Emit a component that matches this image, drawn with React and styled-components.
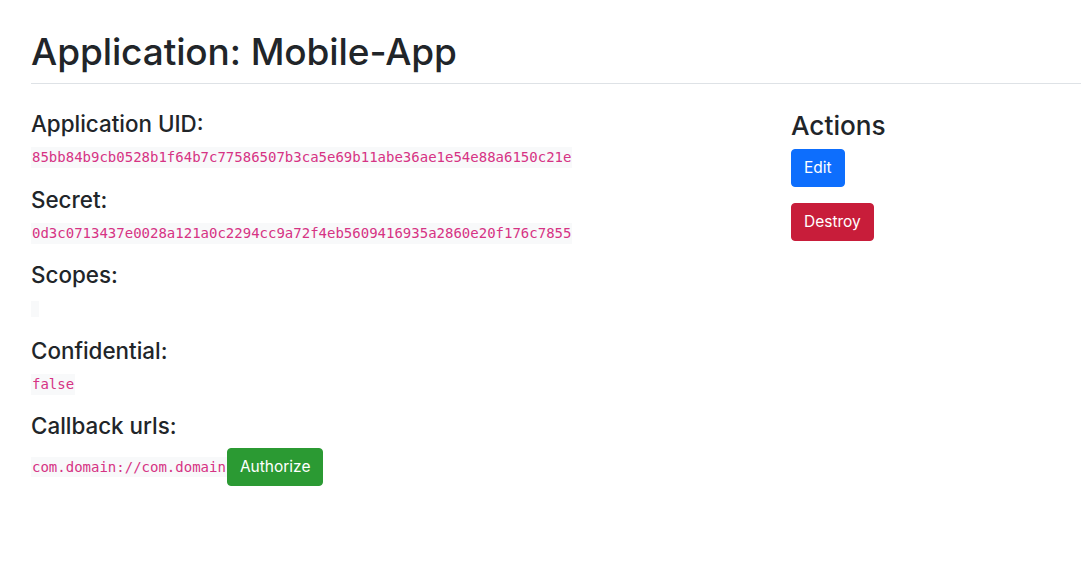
import React from "react";
import styled, { createGlobalStyle } from "styled-components";

const Global = createGlobalStyle`
  html, body { margin: 0; padding: 0; background: #fff; }
  body {
    font-family: Inter, "Noto Sans", "Liberation Sans", sans-serif;
    color: #212529;
    font-size: 16px;
    line-height: 1.5;
  }
  * { box-sizing: border-box; }
`;

const Page = styled.div`
  padding: 29px 0 0 31px;
`;

const Header = styled.div`
  border-bottom: 1px solid #dee2e6;
  padding-bottom: 8px;
  margin-bottom: 26px;
`;

const Title = styled.h1`
  margin: 0;
  font-size: 37px;
  font-weight: 500;
  line-height: 46px;
  letter-spacing: -0.1px;
`;

const Row = styled.div`
  display: grid;
  grid-template-columns: 760px 1fr;
`;

const Column = styled.div`
  display: flex;
  flex-direction: column;
  align-items: flex-start;
`;

const Label = styled.h4`
  margin: 0 0 8px;
  font-size: 22.4px;
  font-weight: 500;
  line-height: 27.6px;
`;

const Field = styled.p`
  margin: 0 0 16px;
  display: flex;
  align-items: center;
  min-height: 24px;
`;

const Code = styled.code`
  display: inline-block;
  font-family: "DejaVu Sans Mono", "Liberation Mono", monospace;
  font-size: 14px;
  color: #d63384;
  background: #f8f9fa;
  padding: 2px 1px;
  min-width: 8px;
  min-height: 16px;
  line-height: 1.2;
`;

const ActionsTitle = styled.h3`
  margin: 0 0 6px;
  font-size: 26.2px;
  font-weight: 500;
  line-height: 32.8px;
`;

const Button = styled.button`
  font-family: inherit;
  font-size: 15.5px;
  line-height: 24px;
  border: 1px solid ${(p) => p.$bg};
  background: ${(p) => p.$bg};
  color: #fff;
  border-radius: 4px;
  padding: 6px 12px;
  cursor: pointer;
  margin: ${(p) => p.$margin || "0"};
`;

export default function App() {
  return (
    <>
      <Global />
      <Page>
        <Header>
          <Title>Application: Mobile-App</Title>
        </Header>
        <Row>
          <Column>
            <Label>Application UID:</Label>
            <Field>
              <Code>85bb84b9cb0528b1f64b7c77586507b3ca5e69b11abe36ae1e54e88a6150c21e</Code>
            </Field>
            <Label>Secret:</Label>
            <Field>
              <Code>0d3c0713437e0028a121a0c2294cc9a72f4eb5609416935a2860e20f176c7855</Code>
            </Field>
            <Label>Scopes:</Label>
            <Field>
              <Code></Code>
            </Field>
            <Label>Confidential:</Label>
            <Field>
              <Code>false</Code>
            </Field>
            <Label>Callback urls:</Label>
            <Field>
              <Code>com.domain://com.domain</Code>
              <Button $bg="#2b9a33">Authorize</Button>
            </Field>
          </Column>
          <Column>
            <ActionsTitle>Actions</ActionsTitle>
            <Button $bg="#0d6efd" $margin="0 0 16px">Edit</Button>
            <Button $bg="#c81d3a">Destroy</Button>
          </Column>
        </Row>
      </Page>
    </>
  );
}
